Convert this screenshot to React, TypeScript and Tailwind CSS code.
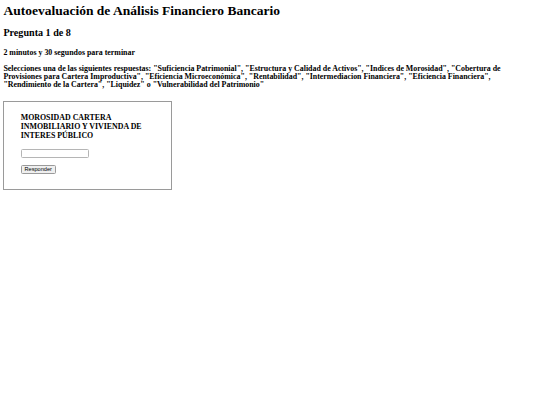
import React from "react";

export default function App() {
  return (
    <div
      className="min-h-[405px] w-[540px] bg-white px-[3.4px] pt-[3.4px] text-black"
      style={{ fontFamily: '"Liberation Serif", "Times New Roman", serif' }}
    >
      <h1 className="m-0 text-[13.5px] leading-[15.5px] font-bold">
        Autoevaluación de Análisis Financiero Bancario
      </h1>
      <h2 className="mt-[8px] text-[10.125px] leading-[11.64px] font-bold">
        Pregunta 1 de 8
      </h2>
      <h4 className="mt-[10px] text-[7.9px] leading-[8px] font-bold">
        2 minutos y 30 segundos para terminar
      </h4>
      <h4 className="mt-[8px] w-[515px] text-[7.9px] leading-[8px] font-bold">
        Selecciones una de las siguientes respuestas: "Suficiencia Patrimonial", "Estructura y Calidad de Activos",
        "Indices de Morosidad", "Cobertura de Provisiones para Cartera Improductiva", "Eficiencia Microeconómica",
        "Rentabilidad", "Intermediacion Financiera", "Eficiencia Financiera", "Rendimiento de la Cartera",
        "Liquidez" o "Vulnerabilidad del Patrimonio"
      </h4>
      <div className="mt-[12px] w-[169px] border border-[#9a9a9a] px-[16.3px] pt-[11px] pb-[15px]">
        <h3 className="text-[7.9px] leading-[9.08px] font-bold">
          MOROSIDAD CARTERA INMOBILIARIO Y VIVIENDA DE INTERES PÚBLICO
        </h3>
        <input
          type="text"
          className="mt-[9px] block h-[9px] w-[68px] rounded-[1.5px] border border-[#b5b5b5] bg-white"
        />
        <button
          className="mt-[7.5px] flex h-[9px] w-[35px] items-center justify-center rounded-[1.5px] border border-[#9a9a9a] bg-[#efefef] text-[5.6px] leading-none text-black"
          style={{ fontFamily: '"Liberation Sans", Arial, sans-serif' }}
        >
          Responder
        </button>
      </div>
    </div>
  );
}
